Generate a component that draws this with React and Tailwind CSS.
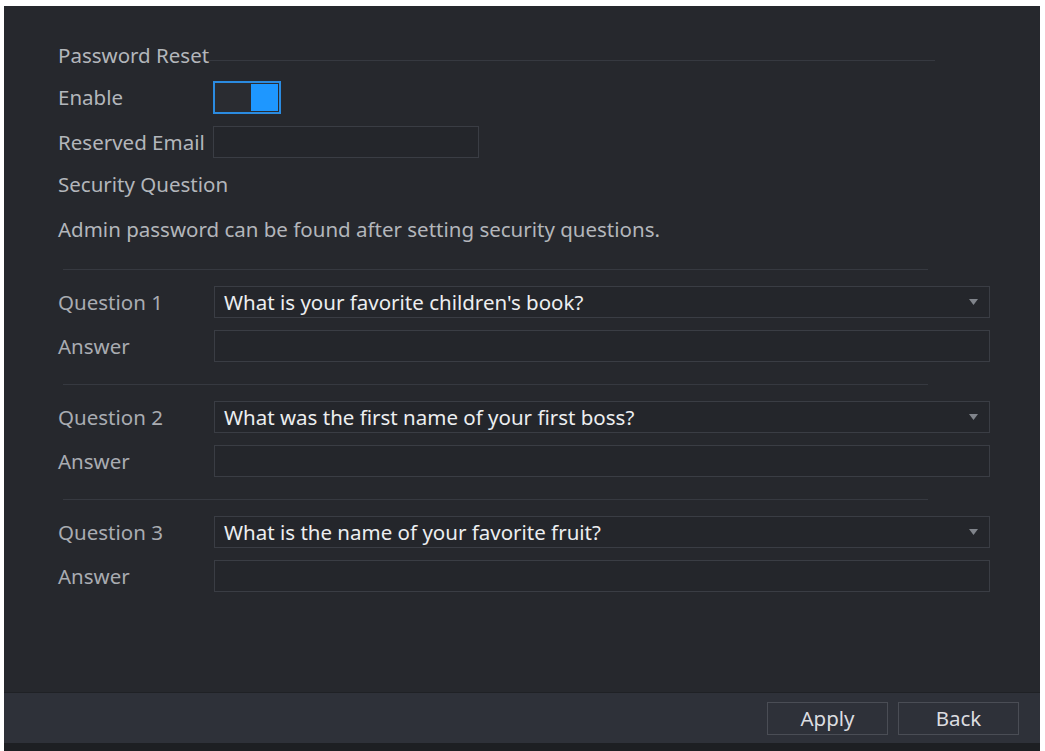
import { useState } from "react";

const questions = [
  { label: "Question 1", value: "What is your favorite children's book?" },
  { label: "Question 2", value: "What was the first name of your first boss?" },
  { label: "Question 3", value: "What is the name of your favorite fruit?" },
];

const Divider = () => <div className="h-px bg-[#363940] ml-[5px] mr-[62px]" />;

const QuestionBlock = ({ label, value }) => (
  <div className="flex flex-col gap-[12px]">
    <div className="flex items-center h-[32px]">
      <span className="w-[156px] text-[#a9acb2]">{label}</span>
      <div className="flex-1 h-[32px] flex items-center justify-between border border-[#3a3d44] bg-[#24262b] pl-[9px] pr-[11px]">
        <span className="text-[#eceef0]">{value}</span>
        <svg width="9" height="6" viewBox="0 0 9 6">
          <path d="M0 0h9L4.5 6z" fill="#80848b" />
        </svg>
      </div>
    </div>
    <div className="flex items-center h-[32px]">
      <span className="w-[156px] text-[#a9acb2]">Answer</span>
      <div className="flex-1 h-[32px] border border-[#3a3d44] bg-[#24262b]" />
    </div>
  </div>
);

export default function App() {
  const [enabled, setEnabled] = useState(true);

  return (
    <div
      className="bg-white pt-[6px] pl-[4px] pr-[5px] h-[751px] text-[20.5px] leading-none"
      style={{ fontFamily: '"Noto Sans", "Open Sans", sans-serif' }}
    >
      <div className="h-full flex flex-col bg-[#26282d]">
        <div className="flex-1 pl-[54px] pr-[50px]">
          {/* password reset header */}
          <div className="flex h-[22px] mt-[38px]">
            <span className="self-center text-[#b3b6bb]">Password Reset</span>
            <div className="flex-1 h-px bg-[#363940] mr-[55px] mt-[16px]" />
          </div>

          <div className="flex items-center h-[34px] mt-[14px]">
            <span className="w-[155px] text-[#b3b6bb]">Enable</span>
            <button
              onClick={() => setEnabled((v) => !v)}
              className="w-[68px] h-[33px] border-2 border-[#2b8be0] p-[1px] flex justify-end bg-[#2a2c31]"
            >
              {enabled && <span className="w-[27px] h-full bg-[#1e97ff]" />}
            </button>
          </div>

          <div className="flex items-center h-[32px] mt-[12px]">
            <span className="w-[155px] text-[#b3b6bb]">Reserved Email</span>
            <div className="w-[266px] h-[32px] border border-[#3a3d44] bg-[#24262b]" />
          </div>

          <div className="h-[44px] flex items-center mt-[4px] text-[#b3b6bb]">Security Question</div>
          <div className="h-[46px] flex items-center text-[#b3b6bb]">
            Admin password can be found after setting security questions.
          </div>

          <div className="mt-[17px]">
            <Divider />
          </div>

          <div className="flex flex-col">
            {questions.map((q, i) => (
              <div key={q.label} className="flex flex-col">
                <div className="pt-[16px]">
                  <QuestionBlock {...q} />
                </div>
                {i < questions.length - 1 && (
                  <div className="pt-[22px]">
                    <Divider />
                  </div>
                )}
              </div>
            ))}
          </div>
        </div>

        {/* footer */}
        <div className="h-[51px] bg-[#2e3139] border-t border-[#1f2125] flex items-center justify-end gap-[10px] pr-[21px]">
          <button className="w-[121px] h-[33px] border border-[#4a4d55] text-[#dcdde0]">Apply</button>
          <button className="w-[121px] h-[33px] border border-[#4a4d55] text-[#dcdde0]">Back</button>
        </div>
        <div className="h-[8px] bg-[#1d1f23]" />
      </div>
    </div>
  );
}
